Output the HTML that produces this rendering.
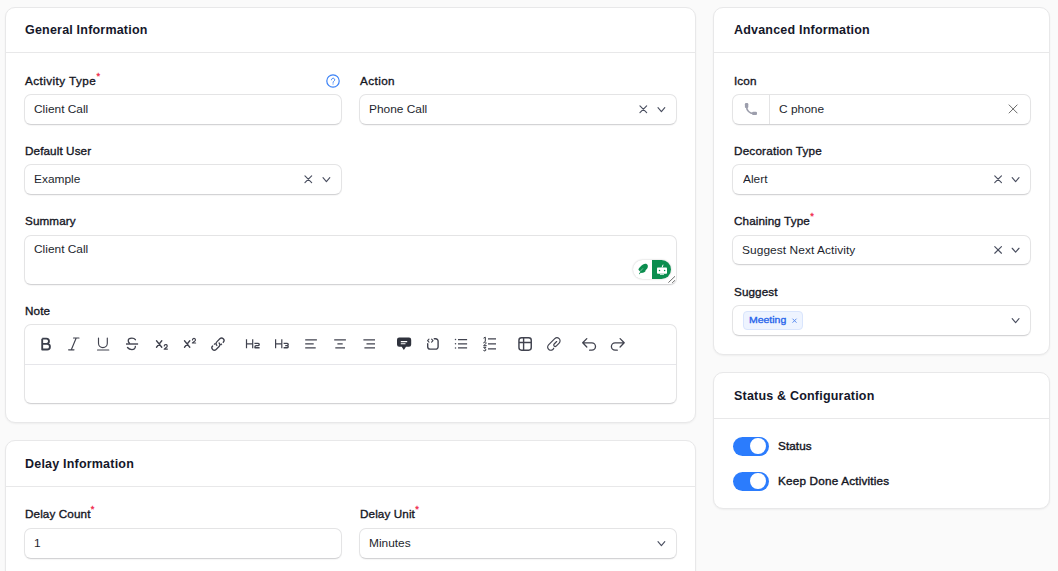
<!DOCTYPE html>
<html>
<head>
<meta charset="utf-8">
<title>Activity Type</title>
<style>
*{box-sizing:border-box;margin:0;padding:0}
html,body{width:1058px;height:571px;overflow:hidden}
body{background:#fafafa;font-family:"Liberation Sans",sans-serif;color:#15172a;position:relative}
.card{position:absolute;background:#fff;border:1px solid #e8e8e9;border-radius:10px;box-shadow:0 1px 2px rgba(0,0,0,.05)}
.card .hd{position:absolute;left:0;right:0;top:0;height:45px;border-bottom:1px solid #e8e8e9}
.card .hd span{position:absolute;left:19px;top:13px;font-size:12.5px;letter-spacing:.2px;font-weight:700;line-height:18px;color:#15172a;white-space:nowrap}
.lbl{position:absolute;font-size:11.3px;line-height:16px;color:#15161f;white-space:nowrap;-webkit-text-stroke:.33px #15161f;letter-spacing:.1px;transform:scaleX(1.035);transform-origin:0 50%}
.lbl i{font-style:normal;color:#f0284a;-webkit-text-stroke:.3px #f0284a;font-size:9px;position:relative;top:-5.6px;left:.3px;letter-spacing:0}
.inp{position:absolute;height:31px;background:#fff;border:1px solid #e4e4e5;border-bottom-color:#d3d3d5;border-radius:7px;box-shadow:0 1px 1px rgba(0,0,0,.04)}
.inp .v{position:absolute;left:9px;top:0;line-height:29px;font-size:11.4px;letter-spacing:0;color:#1d1f2e;white-space:nowrap;transform:scaleX(1.045);transform-origin:0 50%}
svg{position:absolute;overflow:visible}
.ico{fill:none;stroke:#4a4f60;stroke-width:1.15;stroke-linecap:round;stroke-linejoin:round}
.tb{fill:none;stroke:#41434f;stroke-width:1.25;stroke-linecap:round;stroke-linejoin:round}
.tg{position:absolute;width:36px;height:19px;border-radius:10px;background:#2b7cfd}
.tg:after{content:"";position:absolute;right:3.3px;top:1.1px;width:15.4px;height:16px;border-radius:50%;background:#fff}
.tl{position:absolute;font-size:11.3px;line-height:16px;color:#15161f;white-space:nowrap;-webkit-text-stroke:.38px #15161f;letter-spacing:.1px;transform:scaleX(1.035);transform-origin:0 50%}
</style>
</head>
<body>
<div class="card" style="left:5px;top:7px;width:691px;height:416px"><div class="hd"><span>General Information</span></div></div>
<div class="card" style="left:5px;top:440px;width:691px;height:200px"><div class="hd" style="height:46px"><span style="top:14px">Delay Information</span></div></div>
<div class="card" style="left:713px;top:7px;width:337px;height:348px"><div class="hd"><span style="left:20px">Advanced Information</span></div></div>
<div class="card" style="left:713px;top:372px;width:337px;height:137px"><div class="hd" style="height:46px"><span style="left:20px;top:14px">Status &amp; Configuration</span></div></div>
<div class="lbl" style="left:25px;top:73px;letter-spacing:0.42px">Activity Type<i>*</i></div>
<div class="inp" style="left:24px;top:94px;width:318px;height:31px"><span class="v">Client Call</span></div>
<svg style="left:0;top:0" width="1" height="1"><circle cx="333" cy="81" r="6.2" fill="none" stroke="#3b82f6" stroke-width="1.2"/><path d="M331.4 79.8a1.65 1.65 0 1 1 2.5 1.4c-.6.35-.85.7-.85 1.2" fill="none" stroke="#3b82f6" stroke-width="1" stroke-linecap="round"/><circle cx="333.05" cy="83.9" r=".55" fill="#3b82f6"/></svg>
<div class="lbl" style="left:360px;top:73px;letter-spacing:0.4px">Action</div>
<div class="inp" style="left:359px;top:94px;width:318px;height:31px"><span class="v">Phone Call</span></div>
<svg style="left:0;top:0" width="1" height="1"><path class="ico" d="M639.9499999999999 105.95L646.65 112.64999999999999M646.65 105.95L639.9499999999999 112.64999999999999"/></svg>
<svg style="left:0;top:0" width="1" height="1"><path class="ico" d="M658.0 107.64999999999999L661.4 111.55L664.8 107.64999999999999"/></svg>
<div class="lbl" style="left:25px;top:143px">Default User</div>
<div class="inp" style="left:24px;top:164px;width:318px;height:31px"><span class="v">Example</span></div>
<svg style="left:0;top:0" width="1" height="1"><path class="ico" d="M304.95 175.95000000000002L311.65000000000003 182.65M311.65000000000003 175.95000000000002L304.95 182.65"/></svg>
<svg style="left:0;top:0" width="1" height="1"><path class="ico" d="M323.0 177.65L326.4 181.54999999999998L329.79999999999995 177.65"/></svg>
<div class="lbl" style="left:25px;top:213px">Summary</div>
<div class="inp" style="left:24px;top:235px;width:653px;height:50px"><span class="v" style="top:-1px">Client Call</span></div>
<div class="lbl" style="left:25px;top:303px">Note</div>
<div class="inp" style="left:24px;top:324px;width:653px;height:80px"><div style="position:absolute;left:0;right:0;top:39px;height:1px;background:#e6e6ea"></div></div>
<div class="lbl" style="left:25px;top:506px">Delay Count<i>*</i></div>
<div class="inp" style="left:24px;top:528px;width:318px;height:31px"><span class="v">1</span></div>
<div class="lbl" style="left:360px;top:506px">Delay Unit<i>*</i></div>
<div class="inp" style="left:359px;top:528px;width:318px;height:31px"><span class="v">Minutes</span></div>
<svg style="left:0;top:0" width="1" height="1"><path class="ico" d="M658.0 541.65L661.4 545.5500000000001L664.8 541.65"/></svg>
<div class="lbl" style="left:734px;top:73px">Icon</div>
<div class="inp" style="left:732px;top:94px;width:299px;height:31px"><div style="position:absolute;left:36px;top:0;bottom:0;width:1px;background:#e4e4e5"></div><span class="v" style="left:46.3px">C phone</span></div>
<svg style="left:0;top:0" width="1" height="1"><path class="ico" style="stroke-width:.85;stroke:#505050;stroke-linecap:butt" d="M1008.8000000000001 104.65L1017.4 113.25M1017.4 104.65L1008.8000000000001 113.25"/></svg>
<div class="lbl" style="left:734px;top:143px;letter-spacing:0.2px">Decoration Type</div>
<div class="inp" style="left:732px;top:164px;width:299px;height:31px"><span class="v" style="left:10px">Alert</span></div>
<svg style="left:0;top:0" width="1" height="1"><path class="ico" d="M994.75 175.95000000000002L1001.45 182.65M1001.45 175.95000000000002L994.75 182.65"/></svg>
<svg style="left:0;top:0" width="1" height="1"><path class="ico" d="M1012.2 177.65L1015.6 181.54999999999998L1019.0 177.65"/></svg>
<div class="lbl" style="left:734px;top:213px">Chaining Type<i>*</i></div>
<div class="inp" style="left:732px;top:235px;width:299px;height:30px"><span class="v" style="letter-spacing:.07px;left:9px">Suggest Next Activity</span></div>
<svg style="left:0;top:0" width="1" height="1"><path class="ico" d="M994.75 246.55L1001.45 253.25M1001.45 246.55L994.75 253.25"/></svg>
<svg style="left:0;top:0" width="1" height="1"><path class="ico" d="M1012.2 248.25L1015.6 252.14999999999998L1019.0 248.25"/></svg>
<div class="lbl" style="left:734px;top:284px">Suggest</div>
<div class="inp" style="left:732px;top:305px;width:299px;height:31px"></div>
<svg style="left:0;top:0" width="1" height="1"><path class="ico" d="M1012.2 318.65000000000003L1015.6 322.55L1019.0 318.65000000000003"/></svg>
<div style="position:absolute;left:743px;top:311px;width:60px;height:19px;border:1px solid #d9e5fd;background:#eef4ff;border-radius:4px"></div>
<div style="position:absolute;left:749.4px;top:311.6px;font-size:9.7px;line-height:16px;color:#2563eb;-webkit-text-stroke:.32px #2563eb;white-space:nowrap;transform:scaleX(1.08);transform-origin:0 0">Meeting</div>
<svg style="left:0;top:0" width="1" height="1"><path d="M792.5 318.7l4 4M796.5 318.7l-4 4" stroke="#5b8def" stroke-width="1" fill="none"/></svg>
<div class="tg" style="left:733px;top:437px"></div>
<div class="tl" style="left:778px;top:438px">Status</div>
<div class="tg" style="left:733px;top:472px"></div>
<div class="tl" style="left:778px;top:473px;letter-spacing:.2px">Keep Done Activities</div>
<svg style="left:0;top:0" width="1" height="1"><path class="tb" style="stroke-width:1.85;stroke-linecap:butt;stroke:#3a3e4b" d="M42.2 338.65V349.45H47.1A2.82 2.82 0 0 0 47.1 343.8H42.2M42.2 338.65H46.4A2.57 2.57 0 0 1 46.4 343.8"/><path class="tb" style="stroke-width:1.15" d="M73.5 338H79M68.6 349.8H74M76.2 338L71.3 349.8"/><path class="tb" style="stroke-width:1.15" d="M98.5 338V343.2A4.4 4.4 0 0 0 107.3 343.2V338M97.5 350H108.8"/><path class="tb" style="stroke-width:1.35" d="M135.4 339.7C134.6 338.6 133.4 338.05 131.9 338.05C129.7 338.05 128.25 339.1 128.25 340.7C128.25 341.8 128.7 342.6 129.5 343.3M135.35 346.4C135.45 348.4 134 349.55 131.9 349.55C130 349.55 128.5 348.8 127.5 347.5"/><path class="tb" style="stroke-width:1.4;stroke-linecap:butt" d="M126 344H138.1"/><path class="tb" style="stroke-width:1.35" d="M156.5 340.8L161.8 347.3M161.8 340.8L156.5 347.3"/><path class="tb" style="stroke-width:1.2" d="M164.3 346A1.45 1.45 0 1 1 166.8 347L164.2 349.1H167.4"/><path class="tb" style="stroke-width:1.35" d="M184.5 340.8L189.8 347.3M189.8 340.8L184.5 347.3"/><path class="tb" style="stroke-width:1.2" d="M192.5 339.9A1.45 1.45 0 1 1 195 340.9L192.4 343H195.6"/><g transform="translate(217.95 344.15) rotate(-45)"><path class="tb" style="stroke-width:1.3;stroke-linecap:butt" d="M4.5 2.45L5.1 2.45A2.45 2.45 0 0 0 5.1 -2.45L0.8 -2.45A2.45 2.45 0 0 0 -1.6 0.6M3.1 2.45L1.3 2.45M-4.5 -2.45L-5.1 -2.45A2.45 2.45 0 0 0 -5.1 2.45L-0.8 2.45A2.45 2.45 0 0 0 1.6 -0.6M-3.1 -2.45L-1.3 -2.45"/></g><path class="tb" style="stroke-width:1.2;stroke-linecap:butt" d="M246.5 339.3V348.3M252.7 339.3V348.3M246.5 343.9H252.7"/><path class="tb" style="stroke-width:1.4;stroke-linecap:butt" d="M254.4 343.4H258.2Q259.2 343.4 259.2 344.5Q259.2 345.6 258.2 345.6H256Q255 345.6 255 346.7V347.8H259.6"/><path class="tb" style="stroke-width:1.2;stroke-linecap:butt" d="M275.6 339.3V348.3M281.8 339.3V348.3M275.6 343.9H281.8"/><path class="tb" style="stroke-width:1.4;stroke-linecap:butt" d="M283.6 343.4H287.2Q288.2 343.4 288.2 344.5Q288.2 345.6 287.2 345.6H285.2M287.2 345.6Q288.2 345.6 288.2 346.7Q288.2 347.8 287.2 347.8H283.6"/><path class="tb" style="stroke-width:1.3;stroke-linecap:butt" d="M305.2 339.9H316.9M305.2 343.9H313.7M305.2 347.9H315.7"/><path class="tb" style="stroke-width:1.3;stroke-linecap:butt" d="M334.2 339.9H345.9M337.4 343.9H342.7M335.3 347.9H345"/><path class="tb" style="stroke-width:1.3;stroke-linecap:butt" d="M363.4 339.9H375M366.5 343.9H375M364.4 347.9H375"/><path d="M399.2 337.5H409A2.2 2.2 0 0 1 411.2 339.7V344.5A2.2 2.2 0 0 1 409 346.7H406L403.85 350.1L401.7 346.7H399.2A2.2 2.2 0 0 1 397 344.5V339.7A2.2 2.2 0 0 1 399.2 337.5Z" fill="#2f323d"/><path d="M400.8 341.6H407.2M400.8 343.75H405.5" stroke="#fff" stroke-width="1.1" fill="none"/><path class="tb" style="stroke-width:1.4" d="M434.3 338.8H435.7A2.4 2.4 0 0 1 438.1 341.2V346.7A2.4 2.4 0 0 1 435.7 349.1H430.1A2.4 2.4 0 0 1 427.7 346.7V343.8"/><path class="tb" style="stroke-width:1.1" d="M429 339.2L427.6 340.7L429 342.2M431.6 339.2L433 340.7L431.6 342.2"/><path class="tb" style="stroke-width:1.3;stroke-linecap:butt" d="M458 339.6H467.1M458 343.8H467.1M458 347.9H467.1"/><circle cx="455.5" cy="339.6" r=".75" fill="#454956"/><circle cx="455.5" cy="343.8" r=".75" fill="#454956"/><circle cx="455.5" cy="347.9" r=".75" fill="#454956"/><path class="tb" style="stroke-width:1.3;stroke-linecap:butt" d="M488 338.8H496M488 343.8H496M488 348.8H496"/><path class="tb" style="stroke-width:1;stroke:#2f323d" d="M483.9 338L485.3 337.2V340.9M483.8 342.9A1.1 1.1 0 1 1 485.7 343.7L483.7 345.7H486.3M483.7 347.3H485.9L484.6 348.7A1.15 1.15 0 1 1 483.6 350.3"/><rect class="tb" style="stroke-width:1.45" x="518.95" y="337.75" width="12.3" height="12.4" rx="2.6"/><path class="tb" style="stroke-width:1.4;stroke-linecap:butt" d="M518.95 342.45H531.25M523.6 337.75V350.15"/><g transform="translate(554.1 344.1) rotate(-45) scale(.93)"><path class="tb" style="stroke-width:1.25" d="M-3.4 2.85A3.4 3.4 0 1 1 -4.8 -3.65L4.65 -3.65A3.35 3.35 0 0 1 4.65 3.05L0.1 3.05A1.52 1.52 0 0 1 0.1 0L3.9 0"/></g><path class="tb" style="stroke-width:1.3" d="M586.8 338.6L582.7 342.8L586.8 347M582.9 342.8H591.8A3.7 3.7 0 0 1 591.8 350.2H589.6"/><path class="tb" style="stroke-width:1.3" d="M620.1 338.6L624.2 342.8L620.1 347M624 342.8H615.1A3.7 3.7 0 0 0 615.1 350.2H617.3"/></svg>
<div style="position:absolute;left:632.6px;top:259.5px;width:38.6px;height:19.6px;border-radius:10px;background:#fff;box-shadow:0 0 2px rgba(0,0,0,.25);overflow:hidden"><div style="position:absolute;left:19.5px;top:0;bottom:0;right:0;background:#0a8d4e"></div></div><svg style="left:0;top:0" width="1" height="1"><path d="M638.9 274.1L640.3 271.7L638.4 269.7C638.6 268.2 640.5 266 643 264.4C645 263.5 647.3 263.6 647.8 265.6C648.2 267.6 647 269.2 645.6 270.2L645.3 271.5C644.3 272.6 642.3 273.2 640.7 272.8L639.5 274.3Z" fill="#0a8d4e"/><path d="M640.4 271.2L643 268.3" stroke="#fff" stroke-width=".7" stroke-dasharray=".8 .45" fill="none"/><rect x="657" y="267.5" width="10" height="6.3" rx=".8" fill="#fff"/><path d="M662 267.6L663.1 264.7" stroke="#fff" stroke-width="1" fill="none"/><rect x="660" y="274.2" width="4" height=".7" fill="#fff"/><circle cx="659.5" cy="270.4" r=".75" fill="#0a8d4e"/><circle cx="664.6" cy="270.4" r=".75" fill="#0a8d4e"/><path d="M668.4 282.6L675 276.3M672.2 282.8L675 280.3" stroke="#4a4a4a" stroke-width=".8" fill="none"/></svg><svg style="left:0;top:0" width="1" height="1"><rect x="744.9" y="103.1" width="3.4" height="5" rx="1.1" fill="#9c9eac"/><rect x="752.1" y="111.8" width="4.9" height="3.2" rx="1.1" fill="#9c9eac"/><path d="M746.5 106.5C746.7 110.6 749.6 113.4 753.6 113.6" fill="none" stroke="#9c9eac" stroke-width="1.7"/></svg>
</body>
</html>
